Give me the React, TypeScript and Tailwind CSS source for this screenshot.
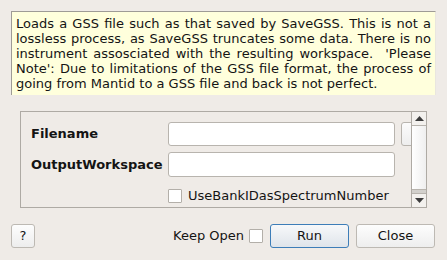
const font = { fontFamily: '"DejaVu Sans", "Liberation Sans", sans-serif' };

const lines = [
  "Loads a GSS file such as that saved by SaveGSS. This is not a",
  "lossless process, as SaveGSS truncates some data. There is no",
  "instrument assosciated with the resulting workspace.  'Please",
  "Note': Due to limitations of the GSS file format, the process of",
];

function Arrow({ up }: { up?: boolean }) {
  return (
    <svg width="9" height="5" viewBox="0 0 9 5">
      <polygon points={up ? "0,5 9,5 4.5,0" : "0,0 9,0 4.5,5"} fill="#3c3c3c" />
    </svg>
  );
}

function Check() {
  return <div className="w-[14px] h-[14px] bg-white border border-[#b3afa9] rounded-[1px] shrink-0" />;
}

export default function App() {
  return (
    <div className="w-[447px] h-[260px] bg-[#efebe7] text-[#141414] text-[13px] flex flex-col pt-[11px] px-[11px] overflow-hidden" style={font}>
      <div className="h-[84px] bg-[#ffffdc] border-t border-l border-[#9e9b96] border-r border-r-[#e9e6df] pl-[4px] pr-[4px] pt-[4px] leading-[15px]">
        {lines.map((l) => (
          <div key={l} className="whitespace-pre text-justify [text-align-last:justify]">{l}</div>
        ))}
        <div>going from Mantid to a GSS file and back is not perfect.</div>
      </div>

      <div className="mt-[16px] ml-[9px] mr-[9px] h-[97px] border border-[#aeaaa4] flex">
        <div className="flex-1 overflow-hidden pt-[10px] pl-[10px] flex flex-col gap-[6px]">
          <div className="flex items-center h-[24px]">
            <div className="w-[137px] shrink-0 font-bold">Filename</div>
            <div className="w-[227px] h-[24px] bg-white border border-[#b8b4ae] rounded-[3px] shrink-0" />
            <div className="ml-[6px] w-[30px] h-[24px] border border-[#b8b4ae] rounded-[3px] bg-gradient-to-b from-[#fbfbfb] to-[#eeeeee] shrink-0" />
          </div>
          <div className="flex items-center h-[25px]">
            <div className="w-[137px] shrink-0 font-bold">OutputWorkspace</div>
            <div className="w-[227px] h-[25px] bg-white border border-[#b8b4ae] rounded-[3px] shrink-0" />
          </div>
          <div className="flex items-center h-[24px] pl-[137px] mt-[1px]">
            <Check />
            <span className="ml-[6px] whitespace-nowrap">UseBankIDasSpectrumNumber</span>
          </div>
        </div>
        <div className="w-[15px] shrink-0 border-l border-[#aeaaa4] flex flex-col">
          <div className="h-[13px] flex items-center justify-center bg-[#f3f1ee]"><Arrow up /></div>
          <div className="flex-1 border-t border-[#b8b4ae] bg-gradient-to-r from-[#ffffff] to-[#efefef]" />
          <div className="h-[4px] bg-[#d2d0cc] border-t border-[#b8b4ae]" />
          <div className="h-[14px] border-t border-[#b8b4ae] flex items-center justify-center bg-[#f3f1ee]"><Arrow /></div>
        </div>
      </div>

      <div className="mt-[16px] flex items-center h-[24px]">
        <div className="w-[24px] h-[24px] border border-[#bdb9b3] rounded-[3px] bg-gradient-to-b from-[#fdfdfd] to-[#ededed] flex items-center justify-center">?</div>
        <div className="flex-1" />
        <span>Keep Open</span>
        <div className="ml-[5px]"><Check /></div>
        <div className="ml-[7px] w-[79px] h-[24px] border border-[#3d7db8] rounded-[3px] bg-gradient-to-b from-[#f7f8fa] to-[#dfe4ea] flex items-center justify-center">Run</div>
        <div className="ml-[7px] w-[79px] h-[24px] border border-[#bdb9b3] rounded-[3px] bg-gradient-to-b from-[#fdfdfd] to-[#eeeeee] flex items-center justify-center">Close</div>
        <div className="w-[1px]" />
      </div>
    </div>
  );
}
